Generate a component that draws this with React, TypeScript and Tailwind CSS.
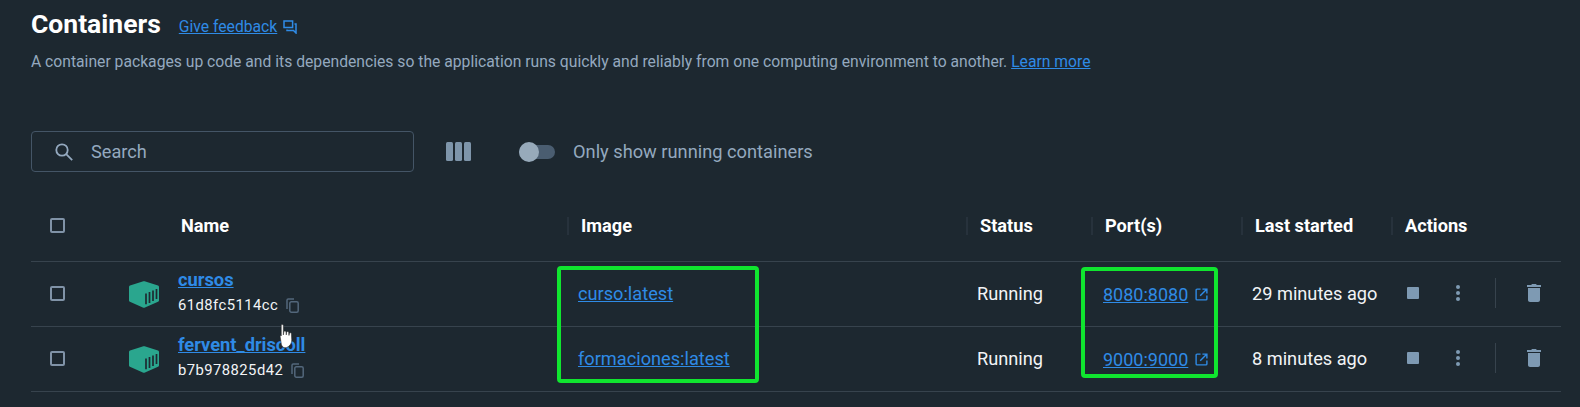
import React from "react";

const ContainerIcon = () => (
  <svg width="30" height="27" viewBox="0 0 30 27" className="block">
    <path d="M13.6.4 1 4.6C.4 4.8 0 5.300 0 6v13.400c0 .6.3 1.100.9 1.400l12.900 5.800c.7.300 1.500.300 2.200 0l13-5.800c.6-.3 1-.8 1-1.400V6c0-.7-.4-1.200-1-1.400L16.400.4c-.9-.3-1.900-.3-2.800 0Z" fill="#2aa68e" />
    <path d="M17 12.500v10.800M20.500 11v11M24 9.500v10.500M27.500 8v10" stroke="#1e2a31" strokeWidth="1.700" fill="none" />
  </svg>
);

const CopyIcon = () => (
  <svg width="13" height="15" viewBox="0 0 13 15" fill="none" stroke="#53677b" strokeWidth="1.500" className="block">
    <path d="M1 11V2.300C1 1.500 1.500 1 2.300 1H8" />
    <rect x="3.800" y="3.800" width="8.400" height="10.400" rx="1.500" />
  </svg>
);

const ExternalIcon = () => (
  <svg width="13" height="13" viewBox="0 0 14 14" fill="none" stroke="#2f8be6" strokeWidth="1.500" className="block">
    <path d="M6 1.200H2.200c-.6 0-1 .4-1 1v9.600c0 .6.4 1 1 1h9.600c.6 0 1-.4 1-1V8M8 1.200h4.800V6M12.600 1.400 5.600 8.400" />
  </svg>
);

const FeedbackIcon = () => (
  <svg width="14" height="14" viewBox="0 0 14 14" fill="none" stroke="#2f8be6" strokeWidth="1.500" className="block">
    <path d="M1 1h8.600v6.500H1zM11.500 4H13v9l-2.500-2.500H4V9.500" />
  </svg>
);

const Check = () => <span className="block h-[15px] w-[15px] rounded-[2px] border-2 border-[#8093a7]" />;

const Sep = () => <span className="absolute left-[-1px] top-[0px] h-[18px] w-[2px] bg-[#27323c]" />;

const cols = "grid grid-cols-[92px_55px_390px_399px_125px_150px_150px_169px]";

const HeadCell = ({ label, sep = true }: { label: string; sep?: boolean }) => (
  <div className="relative flex h-[18px] items-center pl-[13px]">
    {sep && <Sep />}
    <span>{label}</span>
  </div>
);

const rows = [
  { name: "cursos", id: "61d8fc5114cc", image: "curso:latest", port: "8080:8080", started: "29 minutes ago" },
  { name: "fervent_driscoll", id: "b7b978825d42", image: "formaciones:latest", port: "9000:9000", started: "8 minutes ago" },
];

export default function App() {
  return (
    <div className="relative h-[407px] w-[1580px] overflow-hidden bg-[#1d2830] font-['Roboto',sans-serif]">
      <div className="pl-[31px] pr-[19px]">
        <div className="flex h-[50px] items-center pb-[2px]">
          <h1 className="text-[26.500px] font-bold leading-[32px] text-white">Containers</h1>
          <a className="ml-[18px] mt-[6px] text-[15.700px] text-[#2f8be6] underline">Give feedback</a>
          <span className="ml-[6px] mt-[6px]"><FeedbackIcon /></span>
        </div>
        <p className="mt-[1px] h-[21px] text-[15.700px] leading-[21px] text-[#94a9bf]">
          A container packages up code and its dependencies so the application runs quickly and reliably from one computing environment to another.{" "}
          <a className="text-[#2f8be6] underline">Learn more</a>
        </p>
        <div className="mt-[59px] flex h-[41px] items-center">
          <div className="flex h-[41px] w-[383px] items-center rounded-[4px] border border-[#445566] pl-[22px]">
            <svg width="20" height="20" viewBox="0 0 20 20" fill="none" stroke="#94a9bf" strokeWidth="1.800" className="block">
              <circle cx="8" cy="8" r="5.700" />
              <path d="m12.200 12.200 6 6" />
            </svg>
            <span className="ml-[17px] text-[18.200px] text-[#94a9bf]">Search</span>
          </div>
          <div className="ml-[32px] flex gap-[2px]">
            <span className="h-[19px] w-[7px] rounded-[1.500px] bg-[#7e95aa]" />
            <span className="h-[19px] w-[7px] rounded-[1.500px] bg-[#7e95aa]" />
            <span className="h-[19px] w-[7px] rounded-[1.500px] bg-[#7e95aa]" />
          </div>
          <div className="relative ml-[48px] h-[14px] w-[36px] rounded-full bg-[#4a5d70]">
            <span className="absolute left-0 top-[-3px] h-[20px] w-[20px] rounded-full bg-[#97aaba]" />
          </div>
          <span className="ml-[18px] text-[18.250px] text-[#94a9bf]">Only show running containers</span>
        </div>
        <div className={`${cols} mt-[45px] h-[44px] items-start text-[18.200px] font-bold leading-[18px] text-white`}>
          <div className="flex h-[16px] items-center pl-[19px]"><Check /></div>
          <div />
          <div className="flex items-center pl-[3px]"><span>Name</span></div>
          <HeadCell label="Image" />
          <HeadCell label="Status" />
          <HeadCell label="Port(s)" />
          <HeadCell label="Last started" />
          <HeadCell label="Actions" />
        </div>
        {rows.map((r) => (
          <div key={r.name} className={`${cols} h-[65px] items-center border-t border-[#37434d] text-[18.200px] text-[#f2f4f6]`}>
            <div className="-mt-[2px] pl-[19px]"><Check /></div>
            <div className="pl-[6px]"><ContainerIcon /></div>
            <div className="-mt-[3px]">
              <a className="-mt-[2px] block text-[18.300px] font-bold leading-[22px] text-[#2f8be6] underline">{r.name}</a>
              <div className="mt-[5px] flex items-center leading-[18px]">
                <span className="text-[14.800px] tracking-[0.45px]">{r.id}</span>
                <span className="ml-[8px]"><CopyIcon /></span>
              </div>
            </div>
            <div className="pl-[10px]"><a className="text-[#2f8be6] underline">{r.image}</a></div>
            <div className="pl-[10px]">Running</div>
            <div className="flex items-center pl-[11px]">
              <a className="text-[18px] text-[#2f8be6] underline">{r.port}</a>
              <span className="ml-[7px]"><ExternalIcon /></span>
            </div>
            <div className="pl-[10px]">{r.started}</div>
            <div className="-mt-[2px] flex items-center pl-[15px]">
              <span className="h-[12px] w-[12px] rounded-[1px] bg-[#7e9ab3]" />
              <span className="ml-[37px] flex flex-col gap-[2px]">
                <span className="h-[4px] w-[4px] rounded-full bg-[#7e9ab3]" />
                <span className="h-[4px] w-[4px] rounded-full bg-[#7e9ab3]" />
                <span className="h-[4px] w-[4px] rounded-full bg-[#7e9ab3]" />
              </span>
              <span className="ml-[35px] h-[30px] w-[1px] bg-[#37434d]" />
              <span className="ml-[31px]">
                <svg width="14" height="18" viewBox="0 0 14 18" className="block" fill="#7e9ab3">
                  <path d="M5 0h4l.8 1H14v2H0V1h4.200L5 0Z" />
                  <path d="M1 4h12v12c0 1.100-.9 2-2 2H3c-1.100 0-2-.9-2-2V4Z" />
                </svg>
              </span>
            </div>
          </div>
        ))}
        <div className="border-t border-[#37434d]" />
      </div>
      <div className="absolute left-[557px] top-[266px] h-[117px] w-[202px] rounded-[4px] border-[4px] border-[#10e52f]" />
      <div className="absolute left-[1081px] top-[267px] h-[111px] w-[137px] rounded-[4px] border-[4px] border-[#10e52f]" />
      <svg width="18" height="24" viewBox="0 0 16 23" className="absolute left-[278px] top-[324px]">
        <path d="M2.500 1.500c0-1.300 2-1.300 2 0v9l.5-3c.2-1 1.800-1 2 0l.3 3 .3-2.500c.2-1 1.800-1 2 0l.3 3 .4-2c.2-1 1.900-.8 1.900.3l.3 5.700c.1 3-1.200 6-4.800 7.500-2.500.8-4.200-.5-5-2.500L1.500 12.500c-.4-1.200 1-1.800 1-1V1.500Z" fill="#fff" stroke="#222" strokeWidth="0.500" />
      </svg>
    </div>
  );
}
